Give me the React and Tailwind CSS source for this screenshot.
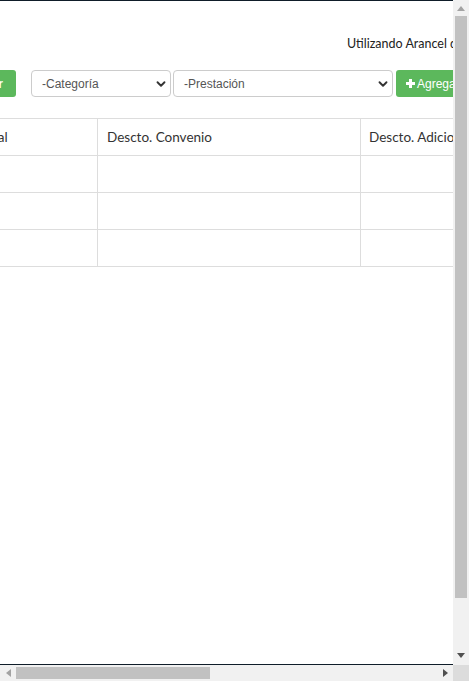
import { ChevronDown } from 'lucide-react'

const rows = [0, 1, 2]

function FakeSelect({ label, width }) {
  return (
    <div
      className={`flex h-[27px] shrink-0 items-center justify-between rounded-[4px] border border-[#cccccc] bg-white pl-[10px] pr-[2px] text-[12px] text-[#555555] ${width}`}
    >
      <span>{label}</span>
      <ChevronDown className="size-[14px] text-[#333333]" strokeWidth={3.2} />
    </div>
  )
}

function PlusGlyph() {
  return (
    <svg width="9" height="9" viewBox="0 0 9 9" className="shrink-0" aria-hidden="true">
      <rect x="3" y="0" width="3" height="9" fill="white" />
      <rect x="0" y="3" width="9" height="3" fill="white" />
    </svg>
  )
}

function Arrow({ dir, color }) {
  const points = {
    up: '0,5 4,0 8,5',
    down: '0,0 8,0 4,5',
    left: '5,0 5,8 0,4',
    right: '0,0 5,4 0,8',
  }[dir]
  const vertical = dir === 'up' || dir === 'down'
  return (
    <svg width={vertical ? 8 : 5} height={vertical ? 5 : 8} aria-hidden="true">
      <polygon points={points} fill={color} />
    </svg>
  )
}

export default function App() {
  return (
    <div className="flex h-[681px] w-[469px] flex-col overflow-hidden bg-white font-['Lato','Liberation_Sans',sans-serif] text-[#333333]">
      <div className="flex h-[665px]">
        {/* visible page area */}
        <div className="h-full w-[453px] overflow-hidden border-y border-[#0f1d29]">
          <div className="whitespace-nowrap pl-[347px] pt-[36px] text-[12.5px] leading-[14px] text-[#222222]">
            Utilizando Arancel de Convenio
          </div>

          <div className="mt-[19px] flex items-center font-['Liberation_Sans',Arial,sans-serif]">
            <div className="flex w-[16px] shrink-0 justify-end overflow-hidden">
              <button
                type="button"
                className="h-[27px] shrink-0 rounded-[3px] bg-[#5cb85c] pl-[10px] pr-[13px] text-[12px] font-semibold text-white"
              >
                Buscar
              </button>
            </div>
            <div className="ml-[15px] flex gap-[2px]">
              <FakeSelect label="-Categoría" width="w-[140px]" />
              <FakeSelect label="-Prestación" width="w-[220px]" />
            </div>
            <button
              type="button"
              className="ml-[3px] flex h-[27px] shrink-0 items-center gap-[2px] rounded-[3px] bg-[#5cb85c] pl-[10px] pr-[10px] text-[12px] text-white"
            >
              <PlusGlyph />
              <span className="whitespace-nowrap">Agregar</span>
            </button>
          </div>

          <div className="-ml-[30px] mt-[21px] w-[600px] text-[13.5px]">
            <div className="flex h-[38px] border-y border-[#dddddd]">
              <div className="flex w-[128px] items-center border-r border-[#dddddd] pl-[9px]">Total</div>
              <div className="flex w-[263px] items-center border-r border-[#dddddd] pl-[9px]">Descto. Convenio</div>
              <div className="flex flex-1 items-center whitespace-nowrap pl-[8px]">Descto. Adicional</div>
            </div>
            {rows.map((r) => (
              <div key={r} className="flex h-[37px] border-b border-[#dddddd]">
                <div className="w-[128px] border-r border-[#dddddd]" />
                <div className="w-[263px] border-r border-[#dddddd]" />
                <div className="flex-1" />
              </div>
            ))}
          </div>
        </div>

        {/* vertical scrollbar */}
        <div className="flex w-[16px] flex-col items-center bg-[#f1f1f1]">
          <div className="flex h-[15px] items-center justify-center pt-[1px]">
            <Arrow dir="up" color="#a3a3a3" />
          </div>
          <div className="mt-[1px] h-[582px] w-[12px] bg-[#c1c1c1]" />
          <div className="flex-1" />
          <div className="flex h-[17px] items-center justify-center pb-[2px]">
            <Arrow dir="down" color="#505050" />
          </div>
        </div>
      </div>

      {/* horizontal scrollbar */}
      <div className="flex h-[16px]">
        <div className="flex w-[453px] items-center bg-[#f1f1f1]">
          <div className="flex w-[16px] justify-center">
            <Arrow dir="left" color="#a3a3a3" />
          </div>
          <div className="h-[12px] w-[194px] bg-[#c1c1c1]" />
          <div className="flex-1" />
          <div className="flex w-[16px] justify-center">
            <Arrow dir="right" color="#505050" />
          </div>
        </div>
        <div className="w-[16px] bg-[#dcdcdc]" />
      </div>
    </div>
  )
}
